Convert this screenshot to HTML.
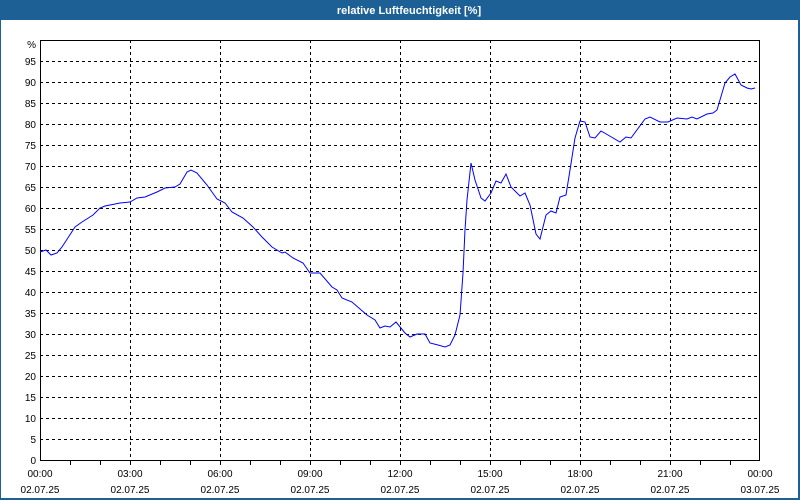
<!DOCTYPE html>
<html><head><meta charset="utf-8"><style>
html,body{margin:0;padding:0;background:#fff;}
svg{display:block;}
text{font-family:"Liberation Sans",sans-serif;font-size:10px;fill:#000;}
</style></head><body>
<svg width="800" height="500" xmlns="http://www.w3.org/2000/svg">
<rect x="0" y="0" width="800" height="500" fill="#fff"/>
<rect x="0" y="0" width="800" height="20" fill="#1c6096"/>
<rect x="0" y="0" width="1" height="500" fill="#1c6096"/>
<rect x="798" y="0" width="2" height="500" fill="#1c6096"/>
<rect x="0" y="498" width="800" height="2" fill="#1c6096"/>
<text x="409" y="14" text-anchor="middle" style="font-weight:bold;font-size:11px;fill:#fff">relative Luftfeuchtigkeit [%]</text>
<g stroke="#000" stroke-width="1" stroke-dasharray="3,3" fill="none" shape-rendering="crispEdges">
<path d="M40 61.5H760M40 82.5H760M40 103.5H760M40 124.5H760M40 145.5H760M40 166.5H760M40 187.5H760M40 208.5H760M40 229.5H760M40 250.5H760M40 271.5H760M40 292.5H760M40 313.5H760M40 334.5H760M40 355.5H760M40 376.5H760M40 397.5H760M40 418.5H760M40 439.5H760"/>
<path d="M130.5 40V460M220.5 40V460M310.5 40V460M400.5 40V460M490.5 40V460M580.5 40V460M670.5 40V460"/>
</g>
<g stroke="#000" stroke-width="1" fill="none" shape-rendering="crispEdges">
<rect x="40.5" y="40.5" width="719" height="420"/>
<path d="M70.5 460V465M100.5 460V465M130.5 460V465M160.5 460V465M190.5 460V465M220.5 460V465M250.5 460V465M280.5 460V465M310.5 460V465M340.5 460V465M370.5 460V465M400.5 460V465M430.5 460V465M460.5 460V465M490.5 460V465M520.5 460V465M550.5 460V465M580.5 460V465M610.5 460V465M640.5 460V465M670.5 460V465M700.5 460V465M730.5 460V465"/>
</g>
<g text-anchor="end">
<text x="36" y="48">%</text>
<text x="36" y="65">95</text><text x="36" y="86">90</text><text x="36" y="107">85</text><text x="36" y="128">80</text><text x="36" y="149">75</text><text x="36" y="170">70</text><text x="36" y="191">65</text><text x="36" y="212">60</text><text x="36" y="233">55</text><text x="36" y="254">50</text><text x="36" y="275">45</text><text x="36" y="296">40</text><text x="36" y="317">35</text><text x="36" y="338">30</text><text x="36" y="359">25</text><text x="36" y="380">20</text><text x="36" y="401">15</text><text x="36" y="422">10</text><text x="36" y="443">5</text><text x="36" y="464">0</text>
</g>
<g text-anchor="middle">
<text x="40" y="477">00:00</text><text x="40" y="493">02.07.25</text>
<text x="130" y="477">03:00</text><text x="130" y="493">02.07.25</text>
<text x="220" y="477">06:00</text><text x="220" y="493">02.07.25</text>
<text x="310" y="477">09:00</text><text x="310" y="493">02.07.25</text>
<text x="400" y="477">12:00</text><text x="400" y="493">02.07.25</text>
<text x="490" y="477">15:00</text><text x="490" y="493">02.07.25</text>
<text x="580" y="477">18:00</text><text x="580" y="493">02.07.25</text>
<text x="670" y="477">21:00</text><text x="670" y="493">02.07.25</text>
<text x="760" y="477">00:00</text><text x="760" y="493">03.07.25</text>
</g>
<polyline fill="none" stroke="#0000ff" stroke-width="1" points="40,252 46,250 51,255 57,253 62,247 75,227 82,222 93,215 100,208 105,206 120,203 130,202 137,198 145,197 157,192 165,188 175,187 180,184 187,172 191,170 197,173 207,185 217,199 225,203 232,212 243,218 253,227 262,237 272,247 282,253 285,252 293,258 303,263 310,273 320,273 332,287 337,290 342,298 352,302 367,315 375,320 380,328 385,326 390,327 396,322 405,333 410,337 417,334 425,334 430,343 438,345 445,347 450,345 455,335 460,315 463,273 465,230 467,200 471,163 475,180 481,198 485,201 491,193 496,181 501,183 506,174 511,187 520,196 525,193 530,205 536,234 540,239 546,215 551,211 556,213 560,197 566,195 570,170 575,138 580,121 585,122 590,137 595,138 601,131 608,135 620,142 626,137 631,138 645,119 650,117 660,122 668,122 677,118 687,119 692,117 697,119 707,114 713,113 717,110 725,83 730,77 735,74 741,85 747,88 751,89 755,88"/>
</svg>
</body></html>
